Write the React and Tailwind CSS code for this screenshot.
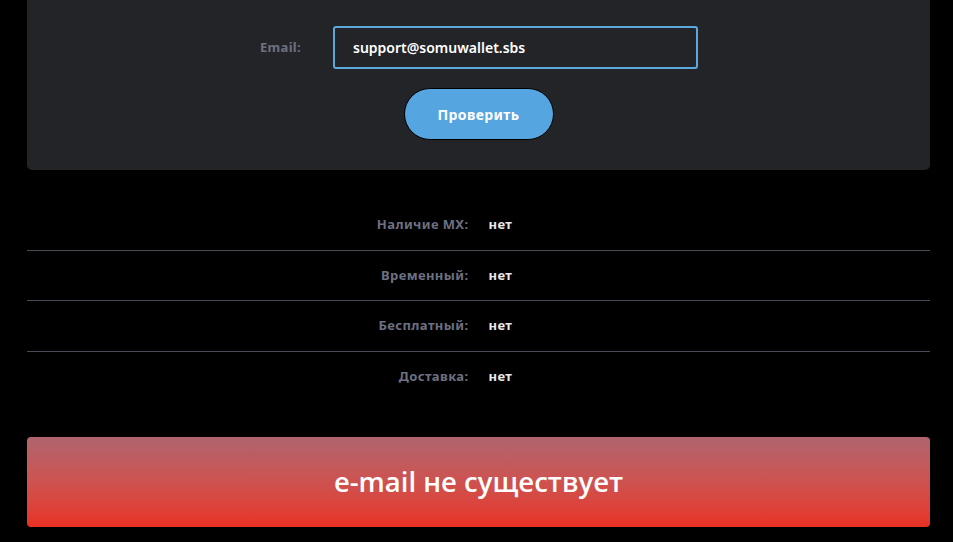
import React, { useState } from "react";

const rows = [
  { label: "Наличие MX:", value: "нет" },
  { label: "Временный:", value: "нет" },
  { label: "Бесплатный:", value: "нет" },
  { label: "Доставка:", value: "нет" },
];

const App = () => {
  const [email, setEmail] = useState("support@somuwallet.sbs");

  return (
    <div className="bg-black pl-[27px] pr-[23px] font-['Noto_Sans',sans-serif] w-[953px] h-[542px] overflow-hidden">
      <div className="bg-[#232428] rounded-b-[5px] h-[170px] flex flex-col items-center pt-[26px]">
        <div className="flex items-center gap-[32px] pl-[1px]">
          <label className="text-[13px] font-bold text-[#6d7080] tracking-[0.3px]">Email:</label>
          <input
            value={email}
            onChange={(e) => setEmail(e.target.value)}
            className="w-[365px] h-[43px] bg-[#232428] border-2 border-[#5aa8dc] rounded-[3px] px-[18px] text-[14px] font-semibold text-white outline-none"
          />
        </div>
        <button className="mt-[19px] w-[150px] h-[52px] rounded-full bg-[#55a6e0] border border-black text-white text-[14px] font-bold tracking-[0.4px]">
          Проверить
        </button>
      </div>

      <div className="mt-[30px]">
        {rows.map((row, i) => (
          <div
            key={row.label}
            className={`grid grid-cols-2 gap-5 items-center h-[50.5px] ${i < rows.length - 1 ? "border-b border-[#4a4b55]" : ""}`}
          >
            <span className="text-right text-[13px] font-bold text-[#6d7080] tracking-[0.4px]">{row.label}</span>
            <span className="text-[13px] font-bold text-[#e8e8e8] tracking-[0.4px]">{row.value}</span>
          </div>
        ))}
      </div>

      <div className="mt-[35px] h-[90px] rounded-[4px] bg-gradient-to-b from-[#b0646e] to-[#e93022] flex items-center justify-center">
        <span className="text-white text-[27.5px] font-semibold font-['Open_Sans',sans-serif]">
          e-mail не существует
        </span>
      </div>
    </div>
  );
};

export default App;
